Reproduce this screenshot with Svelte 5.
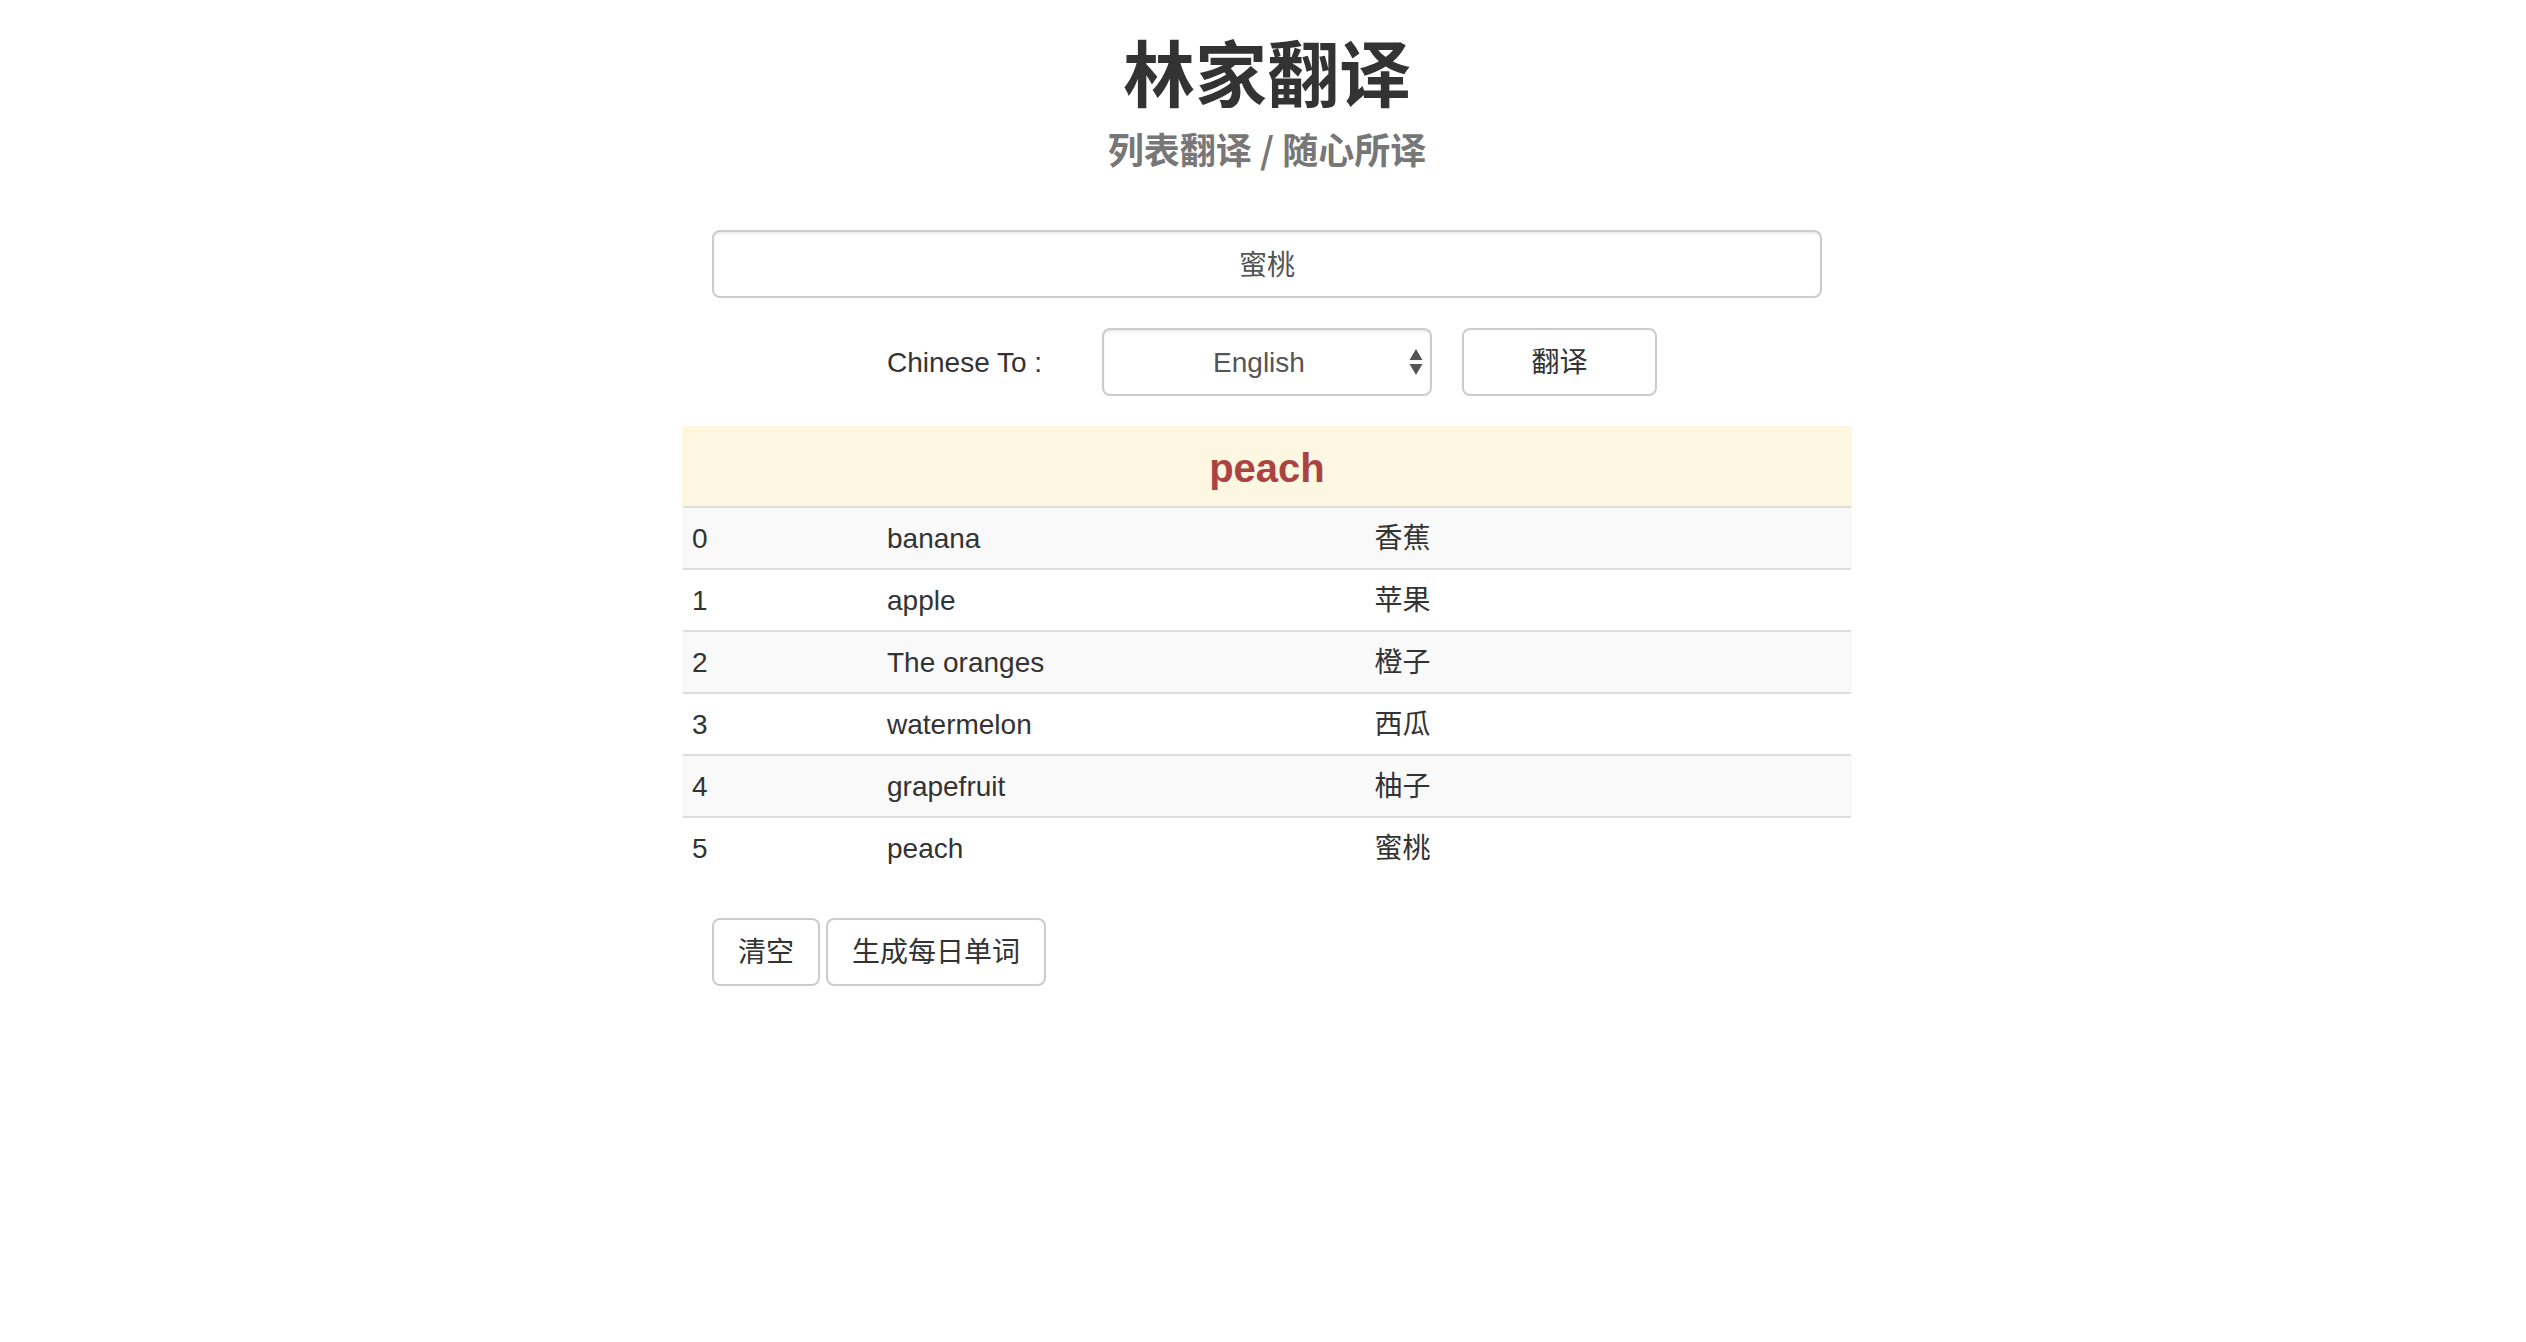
<script>
  let word = $state('蜜桃');
  let language = $state('English');
  const languages = ['English', 'Japanese', 'Korean', 'French'];
  const rows = [
    ['banana', '香蕉'],
    ['apple', '苹果'],
    ['The oranges', '橙子'],
    ['watermelon', '西瓜'],
    ['grapefruit', '柚子'],
    ['peach', '蜜桃'],
  ];
</script>

<main>
  <header>
    <h1>林家翻译</h1>
    <p>列表翻译 / 随心所译</p>
  </header>

  <form onsubmit={(e) => e.preventDefault()}>
    <input class="control" type="text" aria-label="翻译" bind:value={word} />
    <div class="options">
      <label for="language">Chinese To :</label>
      <div class="picker">
        <select id="language" class="control" bind:value={language}>
          {#each languages as name}
            <option value={name}>{name}</option>
          {/each}
        </select>
        <svg class="arrows" viewBox="0 0 14 26" aria-hidden="true">
          <path d="M7 0 13.500 11H.5ZM.5 15H13.500L7 26Z" />
        </svg>
      </div>
      <button type="submit">翻译</button>
    </div>
  </form>

  <table>
    <colgroup>
      <col class="index" />
      <col class="text" />
      <col class="text" />
    </colgroup>
    <thead>
      <tr><th colspan="3">peach</th></tr>
    </thead>
    <tbody>
      {#each rows as [translated, source], i}
        <tr>
          <td>{i}</td>
          <td>{translated}</td>
          <td lang="zh-CN">{source}</td>
        </tr>
      {/each}
    </tbody>
  </table>

  <div class="actions">
    <button type="button">清空</button>
    <button type="button">生成每日单词</button>
  </div>
</main>

<style>
  :global(body) {
    margin: 0;
    background: #fff;
  }
  :global(#app) {
    padding-left: 8px;
  }
  main,
  main * {
    box-sizing: border-box;
  }
  main {
    max-width: 1170px;
    margin: 0 auto;
    color: #333;
    font: 28px/40px 'Liberation Sans', 'Noto Sans CJK SC', sans-serif;
  }
  header {
    padding-top: 36px;
    text-align: center;
  }
  h1 {
    margin: 0;
    font-size: 72px;
    line-height: 80px;
    font-weight: 700;
  }
  p {
    margin: 12px 0 0;
    color: #777;
    font-family: 'Noto Sans CJK SC', sans-serif;
    font-size: 36px;
    line-height: 40px;
    font-weight: 700;
  }
  form {
    padding: 62px 0 30px;
  }
  form > .control {
    display: block;
    width: calc(100% - 60px);
    margin: 0 30px 30px;
  }
  .control,
  button {
    height: 68px;
    border: 2px solid #ccc;
    border-radius: 8px;
    background: #fff;
    font: inherit;
  }
  .control {
    padding: 10px 24px 12px;
    color: #555;
    text-align: center;
    box-shadow: inset 0 2px 2px rgba(0, 0, 0, 0.075);
  }
  .options {
    display: grid;
    grid-template-columns: 1fr 2fr 1fr;
    align-items: center;
    padding: 0 195px;
  }
  label {
    padding: 2px 0 0 10px;
    white-space: nowrap;
  }
  .picker {
    position: relative;
    margin: 0 30px;
  }
  select.control {
    display: block;
    width: 100%;
    padding: 2px 40px 0 24px;
    appearance: none;
    text-align-last: center;
  }
  .arrows {
    position: absolute;
    top: 21px;
    right: 9px;
    width: 14px;
    height: 26px;
    fill: #555;
    pointer-events: none;
  }
  button {
    padding: 2px 24px 0;
    color: #333;
  }
  table {
    width: 100%;
    table-layout: fixed;
    border-collapse: separate;
    border-spacing: 0;
  }
  .index {
    width: 16.6667%;
  }
  th {
    height: 80px;
    padding: 4px 0 0;
    background: #fdf6e0;
    color: #a94442;
    font-size: 40px;
    line-height: 48px;
    font-weight: 700;
  }
  td {
    height: 62px;
    padding: 11px 10px 9px;
    border-top: 2px solid #ddd;
  }
  td:first-child {
    padding-left: 8px;
    border-left: 2px solid transparent;
  }
  td:last-child {
    border-right: 2px solid transparent;
  }
  tbody tr:nth-child(odd) {
    background: #f9f9f9;
  }
  .actions {
    display: flex;
    gap: 6px;
    padding: 40px 30px;
  }
</style>
